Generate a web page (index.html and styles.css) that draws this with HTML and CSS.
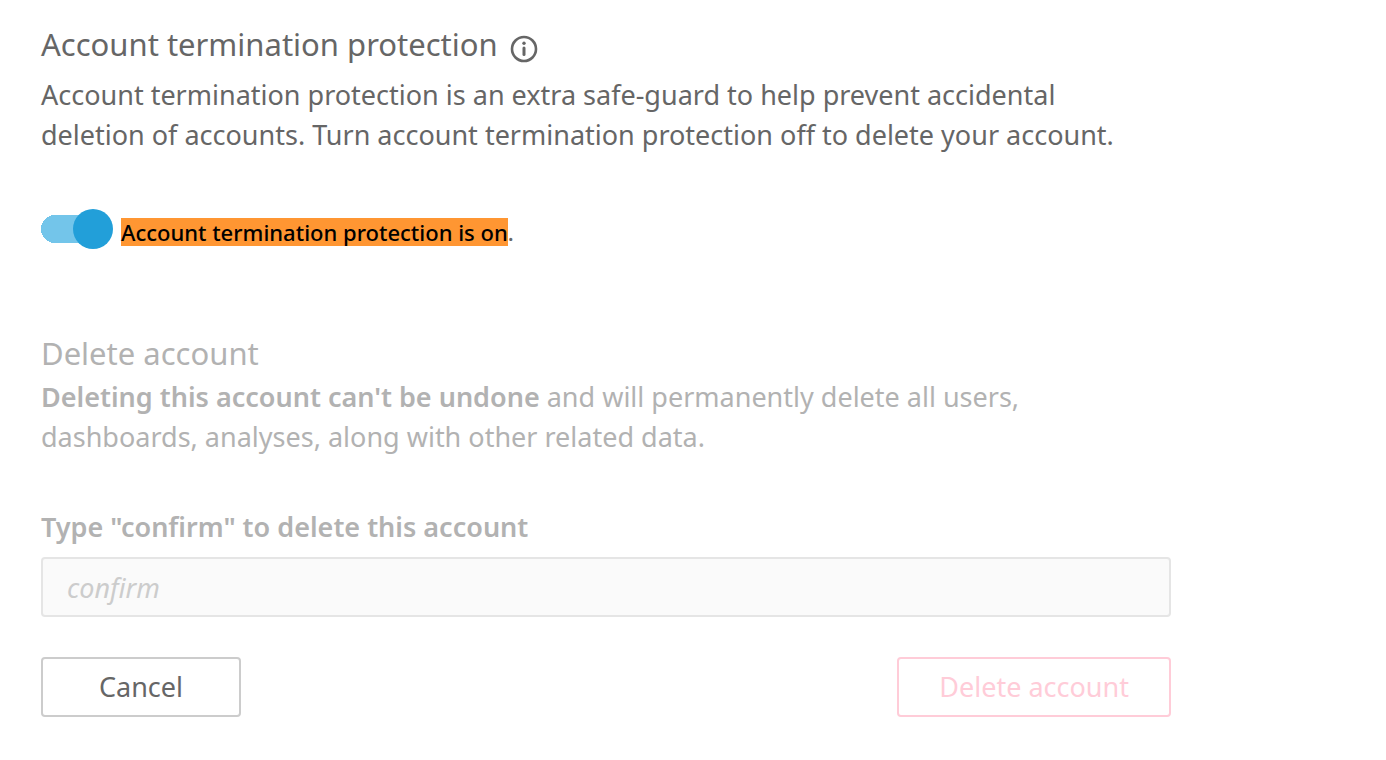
FILE: index.html
```html
<!DOCTYPE html>
<html lang="en">
<head>
    <meta charset="UTF-8">
    <meta name="viewport" content="width=device-width, initial-scale=1.0">
    <title>Account termination</title>
    <link rel="stylesheet" href="styles.css">
</head>
<body>
    <main class="settings">
        <section class="protection">
            <h2>
                Account termination protection
                <svg class="info-icon" viewBox="0 0 28 28" role="img" aria-label="Info">
                    <circle cx="14" cy="14" r="12" fill="none" stroke="currentColor" stroke-width="2.6"/>
                    <circle cx="14" cy="8.2" r="1.7" fill="currentColor"/>
                    <path d="M14 13V19.5" fill="none" stroke="currentColor" stroke-width="3" stroke-linecap="round"/>
                </svg>
            </h2>
            <p>Account termination protection is an extra safe-guard to help prevent accidental deletion of accounts. Turn account termination protection off to delete your account.</p>
            <div class="toggle-row">
                <input type="checkbox" role="switch" id="protection" class="toggle" checked>
                <label for="protection"><mark>Account termination protection is on</mark>.</label>
            </div>
        </section>

        <form class="delete-form">
            <h2>Delete account</h2>
            <p><b>Deleting this account can't be undone</b> and will permanently delete all users, dashboards, analyses, along with other related data.</p>
            <label class="confirm-label" for="confirm">Type "confirm" to delete this account</label>
            <input type="text" id="confirm" class="confirm-input" placeholder="confirm" disabled>
            <div class="actions">
                <button type="button" class="cancel">Cancel</button>
                <button type="submit" class="delete" disabled>Delete account</button>
            </div>
        </form>
    </main>
</body>
</html>
```
FILE: styles.css
```css
* {
    box-sizing: border-box;
}

body {
    margin: 0;
    background-color: #fff;
    color: #666;
    font-family: "Noto Sans", "Open Sans", sans-serif;
    font-size: 27px;
    line-height: 40px;
}

.settings {
    max-width: 1212px;
    padding: 22px 41px;
}

h2 {
    display: flex;
    align-items: center;
    gap: 12px;
    margin: 0;
    font-size: 31px;
    font-weight: 400;
    line-height: 44px;
}

p {
    margin: 0;
    padding-right: 40px;
}

b {
    font-weight: 600;
}

.info-icon {
    width: 28px;
    height: 28px;
    margin-top: 10px;
}

.protection p {
    margin-top: 9px;
}

.toggle-row {
    display: flex;
    align-items: center;
    gap: 8px;
    margin-top: 54px;
    font-size: 22px;
    font-weight: 500;
}

.toggle {
    appearance: none;
    display: flex;
    justify-content: flex-end;
    width: 72px;
    height: 40px;
    margin: 0;
    background: radial-gradient(circle at 14px 20px, #73c5ea 14px, transparent 14px),
        linear-gradient(#73c5ea, #73c5ea) 14px 6px / 38px 28px no-repeat;
    cursor: pointer;
}

.toggle::before {
    content: "";
    width: 40px;
    height: 40px;
    border-radius: 50%;
    background-color: #229fd9;
}

.toggle-row label {
    padding-top: 6px;
    line-height: 28px;
}

mark {
    display: inline-block;
    background-color: #ff9632;
    color: #000;
}

.delete-form {
    margin-top: 82px;
    color: #b2b2b2;
}

.delete-form p {
    margin-top: 2px;
}

.confirm-label {
    display: block;
    margin-top: 50px;
    font-weight: 600;
}

.confirm-input {
    display: block;
    width: 100%;
    height: 60px;
    margin-top: 10px;
    padding: 0 24px;
    border: 2px solid #e5e5e5;
    border-radius: 4px;
    background-color: #fafafa;
    font: inherit;
}

.confirm-input::placeholder {
    color: #ccc;
    font-style: italic;
}

.actions {
    display: flex;
    justify-content: space-between;
    margin-top: 40px;
}

button {
    min-width: 200px;
    height: 60px;
    padding: 0 40px;
    border: 2px solid #ccc;
    border-radius: 4px;
    background-color: #fff;
    color: #666;
    font: inherit;
    cursor: pointer;
}

.delete {
    border-color: #ffccd8;
    color: #ffccd8;
    cursor: default;
}
```
